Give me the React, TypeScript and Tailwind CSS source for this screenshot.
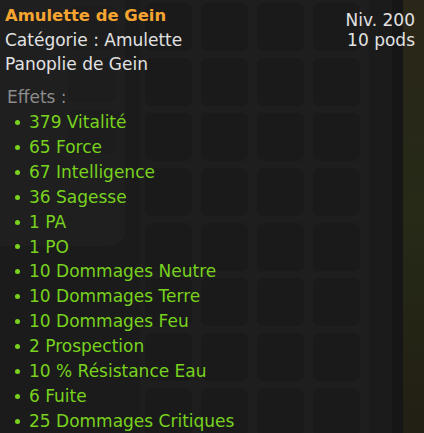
import React from 'react';

const effects = [
  '379 Vitalité',
  '65 Force',
  '67 Intelligence',
  '36 Sagesse',
  '1 PA',
  '1 PO',
  '10 Dommages Neutre',
  '10 Dommages Terre',
  '10 Dommages Feu',
  '2 Prospection',
  '10 % Résistance Eau',
  '6 Fuite',
  '25 Dommages Critiques',
];

const App: React.FC = () => {
  const cells = Array.from({ length: 32 });

  return (
    <div className="relative w-[424px] h-[433px] overflow-hidden bg-[#1b1b1b] font-['DejaVu_Sans',sans-serif]">
      {/* Inventory behind the tooltip */}
      <div className="flex h-full">
        <div className="w-[140px] flex flex-col">
          <div className="h-[246px] w-[125px] bg-[#1f1f1f] rounded-br-[14px] flex flex-col gap-[8px] pt-[6px] pl-[68px]">
            <div className="w-[48px] h-[44px] rounded-[8px] bg-[#1d1d1d]" />
            <div className="w-[48px] h-[44px] rounded-[8px] bg-[#1d1d1d]" />
            <div className="w-[48px] h-[44px] rounded-[8px] bg-[#1d1d1d]" />
          </div>
        </div>
        <div className="w-[229px] bg-[#1e1e1e] pl-[5px] pt-[3px]">
          <div className="grid grid-cols-[repeat(4,47px)] auto-rows-[48px] gap-x-[9px] gap-y-[7px]">
            {cells.map((_, i) => (
              <div key={i} className="rounded-[7px] bg-[#1a1a1a]" />
            ))}
          </div>
        </div>
        <div className="w-[23px] bg-[#1b1b1b]" />
        <div className="w-[11px] bg-[#161616]" />
        <div className="flex-1 bg-gradient-to-b from-[#2a2619] via-[#262a17] to-[#221f14]" />
      </div>

      {/* Tooltip */}
      <div className="absolute inset-0 px-[5px] pt-[4px] text-[17px] leading-[24px]">
        <div className="flex justify-between">
          <div>
            <div className="font-bold text-[16.4px] text-[#f7a531]">Amulette de Gein</div>
            <div className="text-[#e2e2e2]">Catégorie : Amulette</div>
            <div className="text-[#e2e2e2]">Panoplie de Gein</div>
          </div>
          <div className="text-right text-[#e2e2e2] leading-[20px] pt-[6px] pr-[4px]">
            <div>Niv. 200</div>
            <div>10 pods</div>
          </div>
        </div>
        <div className="mt-[9px] pl-[2px] text-[#8c8c8c]">Effets :</div>
        <ul className="pl-[10px] mt-[1px] leading-[24.9px] text-[#78d21e]">
          {effects.map((e) => (
            <li key={e} className="flex items-center">
              <span className="w-[5px] h-[5px] rounded-full bg-[#78d21e] mr-[9px]" />
              {e}
            </li>
          ))}
        </ul>
      </div>
    </div>
  );
};

export default App;
